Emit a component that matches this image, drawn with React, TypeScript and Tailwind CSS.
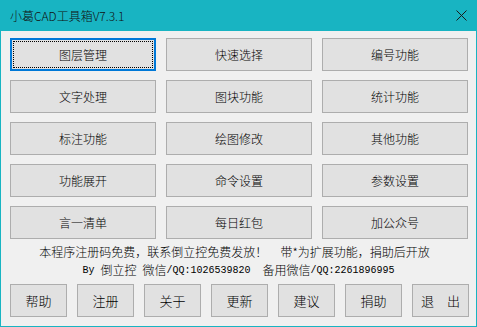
import React from "react";

const cjk = '"Noto Sans CJK SC", "Noto Sans", sans-serif';

const rows = [
  ["图层管理", "快速选择", "编号功能"],
  ["文字处理", "图块功能", "统计功能"],
  ["标注功能", "绘图修改", "其他功能"],
  ["功能展开", "命令设置", "参数设置"],
  ["言一清单", "每日红包", "加公众号"],
];

const bottom = ["帮助", "注册", "关于", "更新", "建议", "捐助", "退　出"];

function Btn({ label, focused, className }: { label: string; focused?: boolean; className: string }) {
  return (
    <div
      className={
        "relative flex items-center justify-center bg-[#E1E1E1] text-black font-light " +
        (focused ? "border-2 border-[#0078D7] " : "border border-[#ADADAD] ") +
        className
      }
    >
      {focused && <div className="absolute inset-[1px] border border-dotted border-black" />}
      <span className="leading-none">{label}</span>
    </div>
  );
}

const mono = { fontFamily: '"Liberation Mono", monospace' };

export default function App() {
  return (
    <div
      className="w-[477px] h-[327px] bg-[#F0F0F0] border border-t-0 border-[#18B4C2] flex flex-col"
      style={{ fontFamily: cjk }}
    >
      <div className="h-[31px] bg-[#18B4C2] flex items-center justify-between pl-[9px] pr-[9px] shrink-0">
        <span className="text-[12px] text-[#111] font-light">小葛CAD工具箱V7.3.1</span>
        <svg width="11" height="11" viewBox="0 0 11 11" className="mb-[1px]">
          <path d="M0.5 0.5 L10.5 10.5 M10.5 0.5 L0.5 10.5" stroke="#1a1a1a" strokeWidth="1" />
        </svg>
      </div>
      <div className="grid grid-cols-[146px_146px_146px] gap-x-[10px] gap-y-[9px] auto-rows-[33px] pl-[9px] mt-[7px]">
        {rows.flat().map((l, i) => (
          <Btn key={i} label={l} focused={i === 0} className="h-[33px] text-[12px]" />
        ))}
      </div>
      <div className="h-[18px] mt-[4px] flex items-center justify-center pr-[8px] text-[12px] text-black font-light whitespace-pre">
        {"本程序注册码免费，联系倒立控免费发放！     带*为扩展功能，捐助后开放"}
      </div>
      <div className="h-[18px] flex items-center justify-center text-[12px] text-black font-light whitespace-pre">
        <span className="text-[10px]" style={mono}>By </span>
        <span>倒立控</span>
        <span className="text-[10px]" style={mono}> </span>
        <span>微信</span>
        <span className="text-[10px]" style={mono}>/QQ:1026539820  </span>
        <span>备用微信</span>
        <span className="text-[10px]" style={mono}>/QQ:2261896995</span>
      </div>
      <div className="flex gap-[10px] pl-[9px] mt-[5px]">
        {bottom.map((l) => (
          <Btn key={l} label={l} className="w-[57px] h-[33px] text-[13px]" />
        ))}
      </div>
    </div>
  );
}
